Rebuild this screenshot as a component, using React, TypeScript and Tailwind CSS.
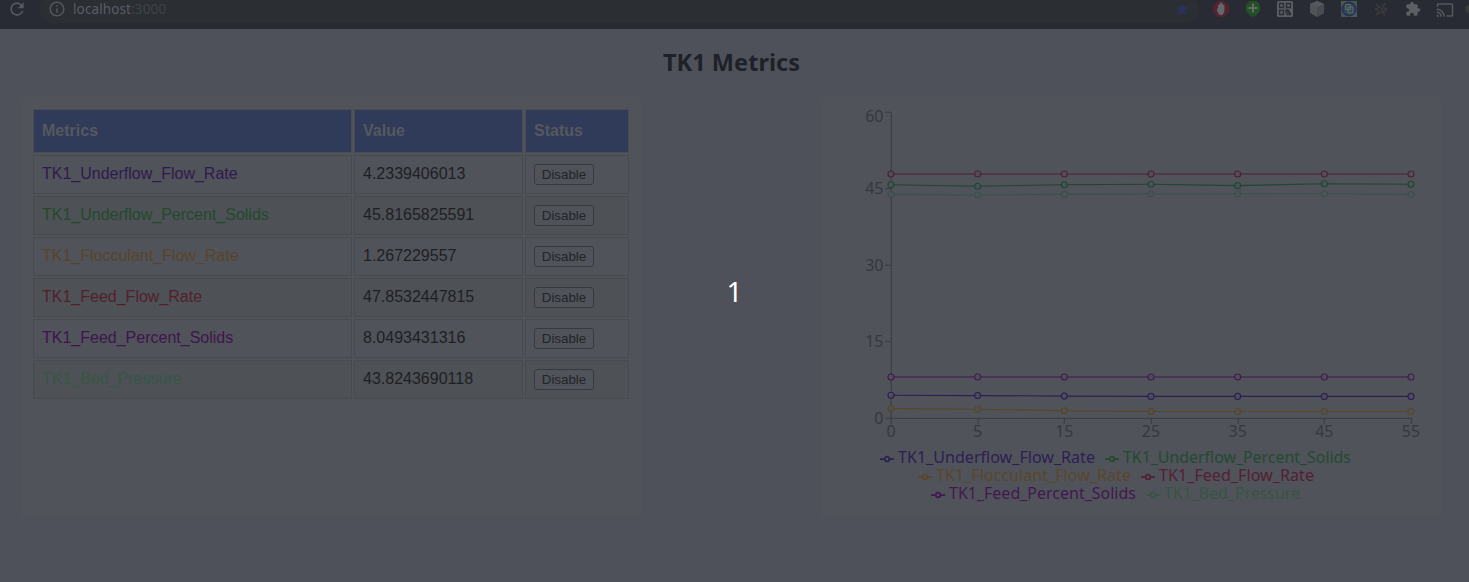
import { MdRefresh, MdInfoOutline, MdExtension, MdCast } from "react-icons/md";

const rows = [
  { name: "TK1_Underflow_Flow_Rate", value: "4.2339406013", color: "text-[#2f1a50]" },
  { name: "TK1_Underflow_Percent_Solids", value: "45.8165825591", color: "text-[#234a2c]" },
  { name: "TK1_Flocculant_Flow_Rate", value: "1.267229557", color: "text-[#58442a]" },
  { name: "TK1_Feed_Flow_Rate", value: "47.8532447815", color: "text-[#531f2b]" },
  { name: "TK1_Feed_Percent_Solids", value: "8.0493431316", color: "text-[#3f154e]" },
  { name: "TK1_Bed_Pressure", value: "43.8243690118", color: "text-[#375645]" },
];

const series = [
  { color: "#2c1e55", ys: [298.2, 298.6, 299.1, 299.4, 299.4, 299.4, 299.4] },
  { color: "#1f4630", ys: [87.7, 89.2, 87.7, 87.3, 88.6, 86.7, 87.3] },
  { color: "#584624", ys: [311.6, 312.2, 313.8, 314.5, 314.5, 314.5, 314.5] },
  { color: "#501f35", ys: [77, 77, 77, 77, 77, 77, 77] },
  { color: "#451753", ys: [280, 280, 280, 280, 280, 280, 280] },
  { color: "#3a504b", ys: [97.4, 98, 97.4, 97, 97, 96.8, 97.5] },
];

const legend = [
  [
    { name: "TK1_Underflow_Flow_Rate", color: "text-[#2d1e55]", width: "w-[197px]", length: 197 },
    { name: "TK1_Underflow_Percent_Solids", color: "text-[#234a31]", width: "w-[228px]", length: 228 },
  ],
  [
    { name: "TK1_Flocculant_Flow_Rate", color: "text-[#5a462b]", width: "w-[195px]", length: 195 },
    { name: "TK1_Feed_Flow_Rate", color: "text-[#531f33]", width: "w-[155px]", length: 155 },
  ],
  [
    { name: "TK1_Feed_Percent_Solids", color: "text-[#431850]", width: "w-[187px]", length: 187 },
    { name: "TK1_Bed_Pressure", color: "text-[#385445]", width: "w-[136px]", length: 136 },
  ],
];

const x = (i: number) => 70 + (520 * i) / 6;

function BrowserBar() {
  return (
    <header className="flex h-[29px] items-start bg-[#282b33]">
      <div className="flex w-[39px] pl-[7px]">
        <MdRefresh className="-mt-px size-5 text-[#55585d]" />
      </div>
      <div className="-mt-[5px] flex h-[28px] w-[1160px] items-center rounded-[14px] bg-[#2b2e32] pl-[9px]">
        <MdInfoOutline className="size-[18px] text-[#54575b]" />
        <span className="ml-[7px] font-['Noto_Sans',sans-serif] text-[13.5px] leading-4 tracking-[0.12px] text-[#5a5c68]">
          localhost<span className="text-[#414449]">:3000</span>
        </span>
        <svg className="ml-auto mr-[9px] size-[16px]" viewBox="0 0 16 16">
          <path d="M8 1.200l2 4.700 5 .4-3.800 3.300 1.200 5L8 12l-4.400 2.600 1.200-5L1 6.300l5-.4z" fill="#2b3259" />
        </svg>
      </div>
      <div className="flex items-start gap-4 pl-[14px] pt-px">
        <svg className="size-4" viewBox="0 0 16 16">
          <path d="M5 0h6l5 5v6l-5 5H5l-5-5V5z" fill="#54232b" />
          <path d="M4 7.500h1V4h1.200V2.500h1.300v-1h1.300v1h1.300V4h1.300v6.500L9.500 14h-3L4 10z" fill="#63666a" />
        </svg>
        <svg className="size-4" viewBox="0 0 16 16">
          <circle cx="8" cy="7" r="7.500" fill="#245027" />
          <path d="M4.500 13h7v2l-3.500 1-3.500-1z" fill="#2a452d" />
          <path d="M8 2.500v9M3.500 7h9" stroke="#5f6d60" strokeWidth="2" />
        </svg>
        <svg className="size-4" viewBox="0 0 16 16">
          <rect width="16" height="16" rx="1.500" fill="#5a5d61" />
          <path d="M2.500 2.500h4v4h-4zM9.500 2.500h4v4h-4zM2.500 9.500h4v4h-4zM9 9h2v2H9zM12 9v3h2M9 13h2v1.500M12 13.500h2" fill="none" stroke="#2b2e34" strokeWidth="1.300" />
        </svg>
        <svg className="size-4" viewBox="0 0 16 16">
          <path d="M8 0l7 3v9l-7 4-7-4V3z" fill="#505357" />
          <path d="M1 3l7 3 7-3-7-3z" fill="#56595d" />
          <path d="M8 6l7-3v9l-7 4z" fill="#484b50" />
        </svg>
        <svg className="size-4" viewBox="0 0 16 16">
          <rect width="16" height="16" fill="#505553" />
          <circle cx="8" cy="8" r="6.700" fill="#304452" stroke="#243458" strokeWidth="1.800" />
          <path d="M4.500 3.500h5v5h-5zM7 6h5v6H7z" fill="#304c4e" stroke="#606a6c" strokeWidth="1" />
          <path d="M0 12v4h4M12 0h4v4" fill="none" stroke="#35583f" strokeWidth="1" />
        </svg>
        <svg className="size-4" viewBox="0 0 16 16">
          <path d="M3 3l4 3 5-4-2 5 4 1-4 2 2 4-4-3-5 3 3-4-4-2 4-1zM7 6l3 5M9 9c0-3 4-3 4 0s-4 3-4 0" fill="none" stroke="#3d3c3f" strokeWidth="1" />
        </svg>
        <MdExtension className="size-4 text-[#5c5f63]" />
        <MdCast className="-ml-px size-[18px] text-[#55585c]" />
        <span className="-ml-[5px] mt-1 h-2 w-1 rounded-l-full bg-[#3a3a3c]" />
      </div>
    </header>
  );
}

function MetricsTable() {
  return (
    <table className="w-[600px] table-fixed border-separate border-spacing-[2px] text-left font-['Liberation_Sans',sans-serif] text-[16px] leading-5">
      <colgroup>
        <col className="w-[319px]" />
        <col className="w-[169px]" />
        <col className="w-[104px]" />
      </colgroup>
      <thead>
        <tr className="h-[44px]">
          {["Metrics", "Value", "Status"].map((h) => (
            <th key={h} className="border border-[#4b4d51] bg-[#303a59] p-0 pl-2 text-[#55595f]">
              {h}
            </th>
          ))}
        </tr>
      </thead>
      <tbody>
        {rows.map((r) => (
          <tr key={r.name} className="h-[39px] odd:bg-[#50535a] even:bg-[#4e5156]">
            <td className={`border border-[#484b4e] p-0 pb-[2px] pl-2 ${r.color}`}>{r.name}</td>
            <td className="border border-[#484b4e] p-0 pb-[2px] pl-2 text-[#1e1f24]">{r.value}</td>
            <td className="border border-[#484b4e] p-0 pl-2">
              <button className="block h-[21px] w-[60px] rounded-[3px] border border-[#37393f] bg-[#505359] text-[13.33px] leading-[19px] text-[#232429]">
                Disable
              </button>
            </td>
          </tr>
        ))}
      </tbody>
    </table>
  );
}

function Chart() {
  return (
    <svg className="block h-[346px] w-[620px] font-['Noto_Sans',sans-serif]" viewBox="0 0 620 346">
      <g stroke="#3e4045" strokeWidth="1.300" fill="none">
        <path d="M70.300 15v306M64 321.300h526" />
        {[15.3, 91.5, 168.3, 244.5].map((y) => (
          <path key={y} d={`M64 ${y}h6`} />
        ))}
        {[0, 1, 2, 3, 4, 5, 6].map((i) => (
          <path key={i} d={`M${Math.round(x(i)) + 0.3} 321v6`} />
        ))}
      </g>
      <g fill="#36383e" fontSize="16">
        {[
          ["60", 25],
          ["45", 97],
          ["30", 174],
          ["15", 250],
          ["0", 327],
        ].map(([t, y]) => (
          <text key={t} x="62.500" y={y} textAnchor="end">
            {t}
          </text>
        ))}
        {["0", "5", "15", "25", "35", "45", "55"].map((t, i) => (
          <text key={t} x={x(i)} y="340" textAnchor="middle">
            {t}
          </text>
        ))}
      </g>
      {series.map((s) => (
        <g key={s.color} stroke={s.color} strokeWidth="1.100">
          <polyline fill="none" points={s.ys.map((y, i) => `${x(i)},${y}`).join(" ")} />
          {s.ys.map((y, i) => (
            <circle key={i} cx={x(i)} cy={y} r="3" fill="#50535a" fillOpacity="0.8" />
          ))}
        </g>
      ))}
    </svg>
  );
}

function Legend() {
  return (
    <div className="flex flex-col items-center pt-[6px] pr-[31px] font-['Noto_Sans',sans-serif]">
      {legend.map((line, n) => (
        <div key={n} className="flex h-[18px] gap-[10px]">
          {line.map((item) => (
            <div key={item.name} className={`flex items-center gap-1 ${item.color}`}>
              <svg className="mt-[2px] h-[14px] w-[14px]" viewBox="0 0 32 32">
                <path d="M0 16h10.700a5.300 5.300 0 1 1 10.600 0H32M21.300 16a5.300 5.300 0 1 1-10.600 0" fill="none" stroke="currentColor" strokeWidth="4" />
              </svg>
              <svg className={`h-[18px] overflow-visible ${item.width}`}>
                <text x="0" y="14" fontSize="16" fill="currentColor" textLength={item.length} lengthAdjust="spacingAndGlyphs">
                  {item.name}
                </text>
              </svg>
            </div>
          ))}
        </div>
      ))}
    </div>
  );
}

export default function App() {
  return (
    <div className="relative h-[582px] w-[1469px] overflow-hidden bg-[#4e5159]">
      <BrowserBar />
      <h1 className="flex h-[68px] justify-center pr-[7px] pt-[17px] font-['Noto_Sans',sans-serif] text-[24px] leading-8 font-bold text-[#1f2128]">
        <svg className="h-8 w-[137px] overflow-visible">
          <text x="0" y="25" fontSize="24" fill="currentColor" textLength="137" lengthAdjust="spacingAndGlyphs">
            TK1 Metrics
          </text>
        </svg>
      </h1>
      <main className="flex gap-[180px] pl-[21px]">
        <section className="h-[420px] w-[620px] bg-[#50535a] px-[10px] pt-[10px]">
          <MetricsTable />
        </section>
        <section className="h-[420px] w-[620px] bg-[#50535a]">
          <Chart />
          <Legend />
        </section>
      </main>
      <div className="pointer-events-none absolute inset-0 flex items-center justify-center font-['Noto_Sans',sans-serif] text-[28px] leading-none text-white">
        1
      </div>
    </div>
  );
}
